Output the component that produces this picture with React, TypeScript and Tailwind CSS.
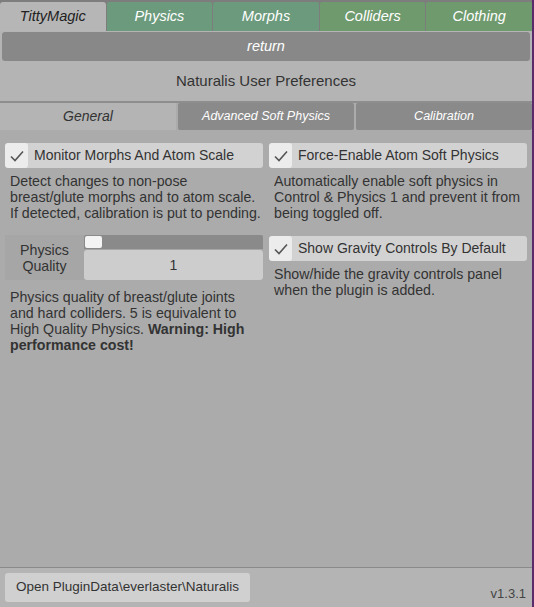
import React from "react";

function Check() {
  return (
    <svg width="16" height="14" viewBox="0 0 16 14">
      <path d="M2 7.5 L6 11.5 L14 2.5" fill="none" stroke="#555" strokeWidth="1.6" />
    </svg>
  );
}

function Toggle({ label }: { label: string }) {
  return (
    <div className="flex h-[25px] rounded-[3px] bg-[#d2d2d2] overflow-hidden">
      <div className="w-[23px] shrink-0 bg-[#ececec] flex items-center justify-center rounded-[3px]">
        <Check />
      </div>
      <div className="pl-[6px] flex items-center text-[14px] text-[#333] whitespace-nowrap">{label}</div>
    </div>
  );
}

export default function App() {
  const tabs = ["Physics", "Morphs", "Colliders", "Clothing"];
  const desc = "px-[5px] text-[14.2px] leading-[16px] text-[#333] whitespace-nowrap";
  return (
    <div
      className="w-[534px] h-[607px] flex bg-[#ababab] text-[#333] overflow-hidden"
      style={{ fontFamily: '"Liberation Sans", Arial, sans-serif' }}
    >
      <div className="w-[532px] shrink-0 flex flex-col">
        {/* Top tabs */}
        <div className="bg-[#7d7d7d] pt-[2px] grid grid-cols-5 gap-[1px] h-[31px]">
          <div className="bg-[#b6b6b6] flex items-center justify-center italic text-[14.5px] text-[#222] rounded-t-[3px]">
            TittyMagic
          </div>
          {tabs.map((t, i) => (
            <div
              key={t}
              className={`flex items-center justify-center italic text-[14.5px] text-white rounded-t-[2px] ${
                i < 2 ? "bg-[#6b9a7c]" : "bg-[#6f9a6e]"
              }`}
            >
              {t}
            </div>
          ))}
        </div>
        <div className="bg-[#b4b4b4] px-[2px] pt-[1px]">
          <div className="h-[29px] bg-[#888888] rounded-[3px] flex items-center justify-center italic text-[14.5px] text-white">
            return
          </div>
          <div className="h-[40px] flex items-center justify-center text-[15px] text-[#333]">
            Naturalis User Preferences
          </div>
        </div>
        <div className="h-[2px] bg-[#8e8e8e]" />
        {/* Sub tabs */}
        <div className="grid grid-cols-3 gap-[2px] h-[27px] bg-[#ababab]">
          <div className="bg-[#b4b4b4] flex items-center justify-center italic text-[14px] text-[#333]">
            General
          </div>
          <div className="bg-[#8a8a8a] flex items-center justify-center italic text-[12.5px] text-white rounded-[2px]">
            Advanced Soft Physics
          </div>
          <div className="bg-[#8a8a8a] flex items-center justify-center italic text-[12.5px] text-white rounded-[2px]">
            Calibration
          </div>
        </div>
        {/* Content */}
        <div className="flex-1 grid grid-cols-2 px-[5px] pt-[13px] gap-[6px] items-start">
          <div className="min-w-0 flex flex-col">
            <Toggle label="Monitor Morphs And Atom Scale" />
            <p className={desc + " mt-[5px]"}>
              Detect changes to non-pose
              <br />
              breast/glute morphs and to atom scale.
              <br />
              If detected, calibration is put to pending.
            </p>
            <div className="mt-[14px] flex h-[45px] bg-[#a6a6a6]">
              <div className="w-[79px] shrink-0 flex items-center justify-center text-center text-[14.2px] leading-[16px] text-[#333]">
                Physics
                <br />
                Quality
              </div>
              <div className="flex-1 flex flex-col">
                <div className="h-[14px] bg-[#8a8a8a] rounded-t-[2px] relative">
                  <div className="absolute left-[1px] top-[1px] w-[17px] h-[12px] bg-[#f4f4f4] rounded-[2px]" />
                </div>
                <div className="flex-1 bg-[#cdcdcd] rounded-[3px] flex items-center justify-center text-[14px] text-[#333] mt-[1px]">
                  1
                </div>
              </div>
            </div>
            <p className={desc + " mt-[9px]"}>
              Physics quality of breast/glute joints
              <br />
              and hard colliders. 5 is equivalent to
              <br />
              High Quality Physics. <b>Warning: High</b>
              <br />
              <b>performance cost!</b>
            </p>
          </div>
          <div className="min-w-0 flex flex-col">
            <Toggle label="Force-Enable Atom Soft Physics" />
            <p className={desc + " mt-[5px]"}>
              Automatically enable soft physics in
              <br />
              Control &amp; Physics 1 and prevent it from
              <br />
              being toggled off.
            </p>
            <div className="mt-[15px]">
              <Toggle label="Show Gravity Controls By Default" />
            </div>
            <p className={desc + " mt-[5px]"}>
              Show/hide the gravity controls panel
              <br />
              when the plugin is added.
            </p>
          </div>
        </div>
        {/* Footer */}
        <div className="h-[1px] bg-[#8a8a8a]" />
        <div className="h-[39px] bg-[#b4b4b4] flex items-center px-[5px] justify-between">
          <div className="w-[245px] h-[29px] bg-[#d0d0d0] rounded-[3px] flex items-center justify-center text-[13.5px] text-[#333]">
            Open PluginData\everlaster\Naturalis
          </div>
          <div className="text-[13px] text-[#444] mt-[12px] mr-[1px]">v1.3.1</div>
        </div>
      </div>
      <div className="w-[2px] shrink-0 bg-[#5a2a6a]" />
    </div>
  );
}
